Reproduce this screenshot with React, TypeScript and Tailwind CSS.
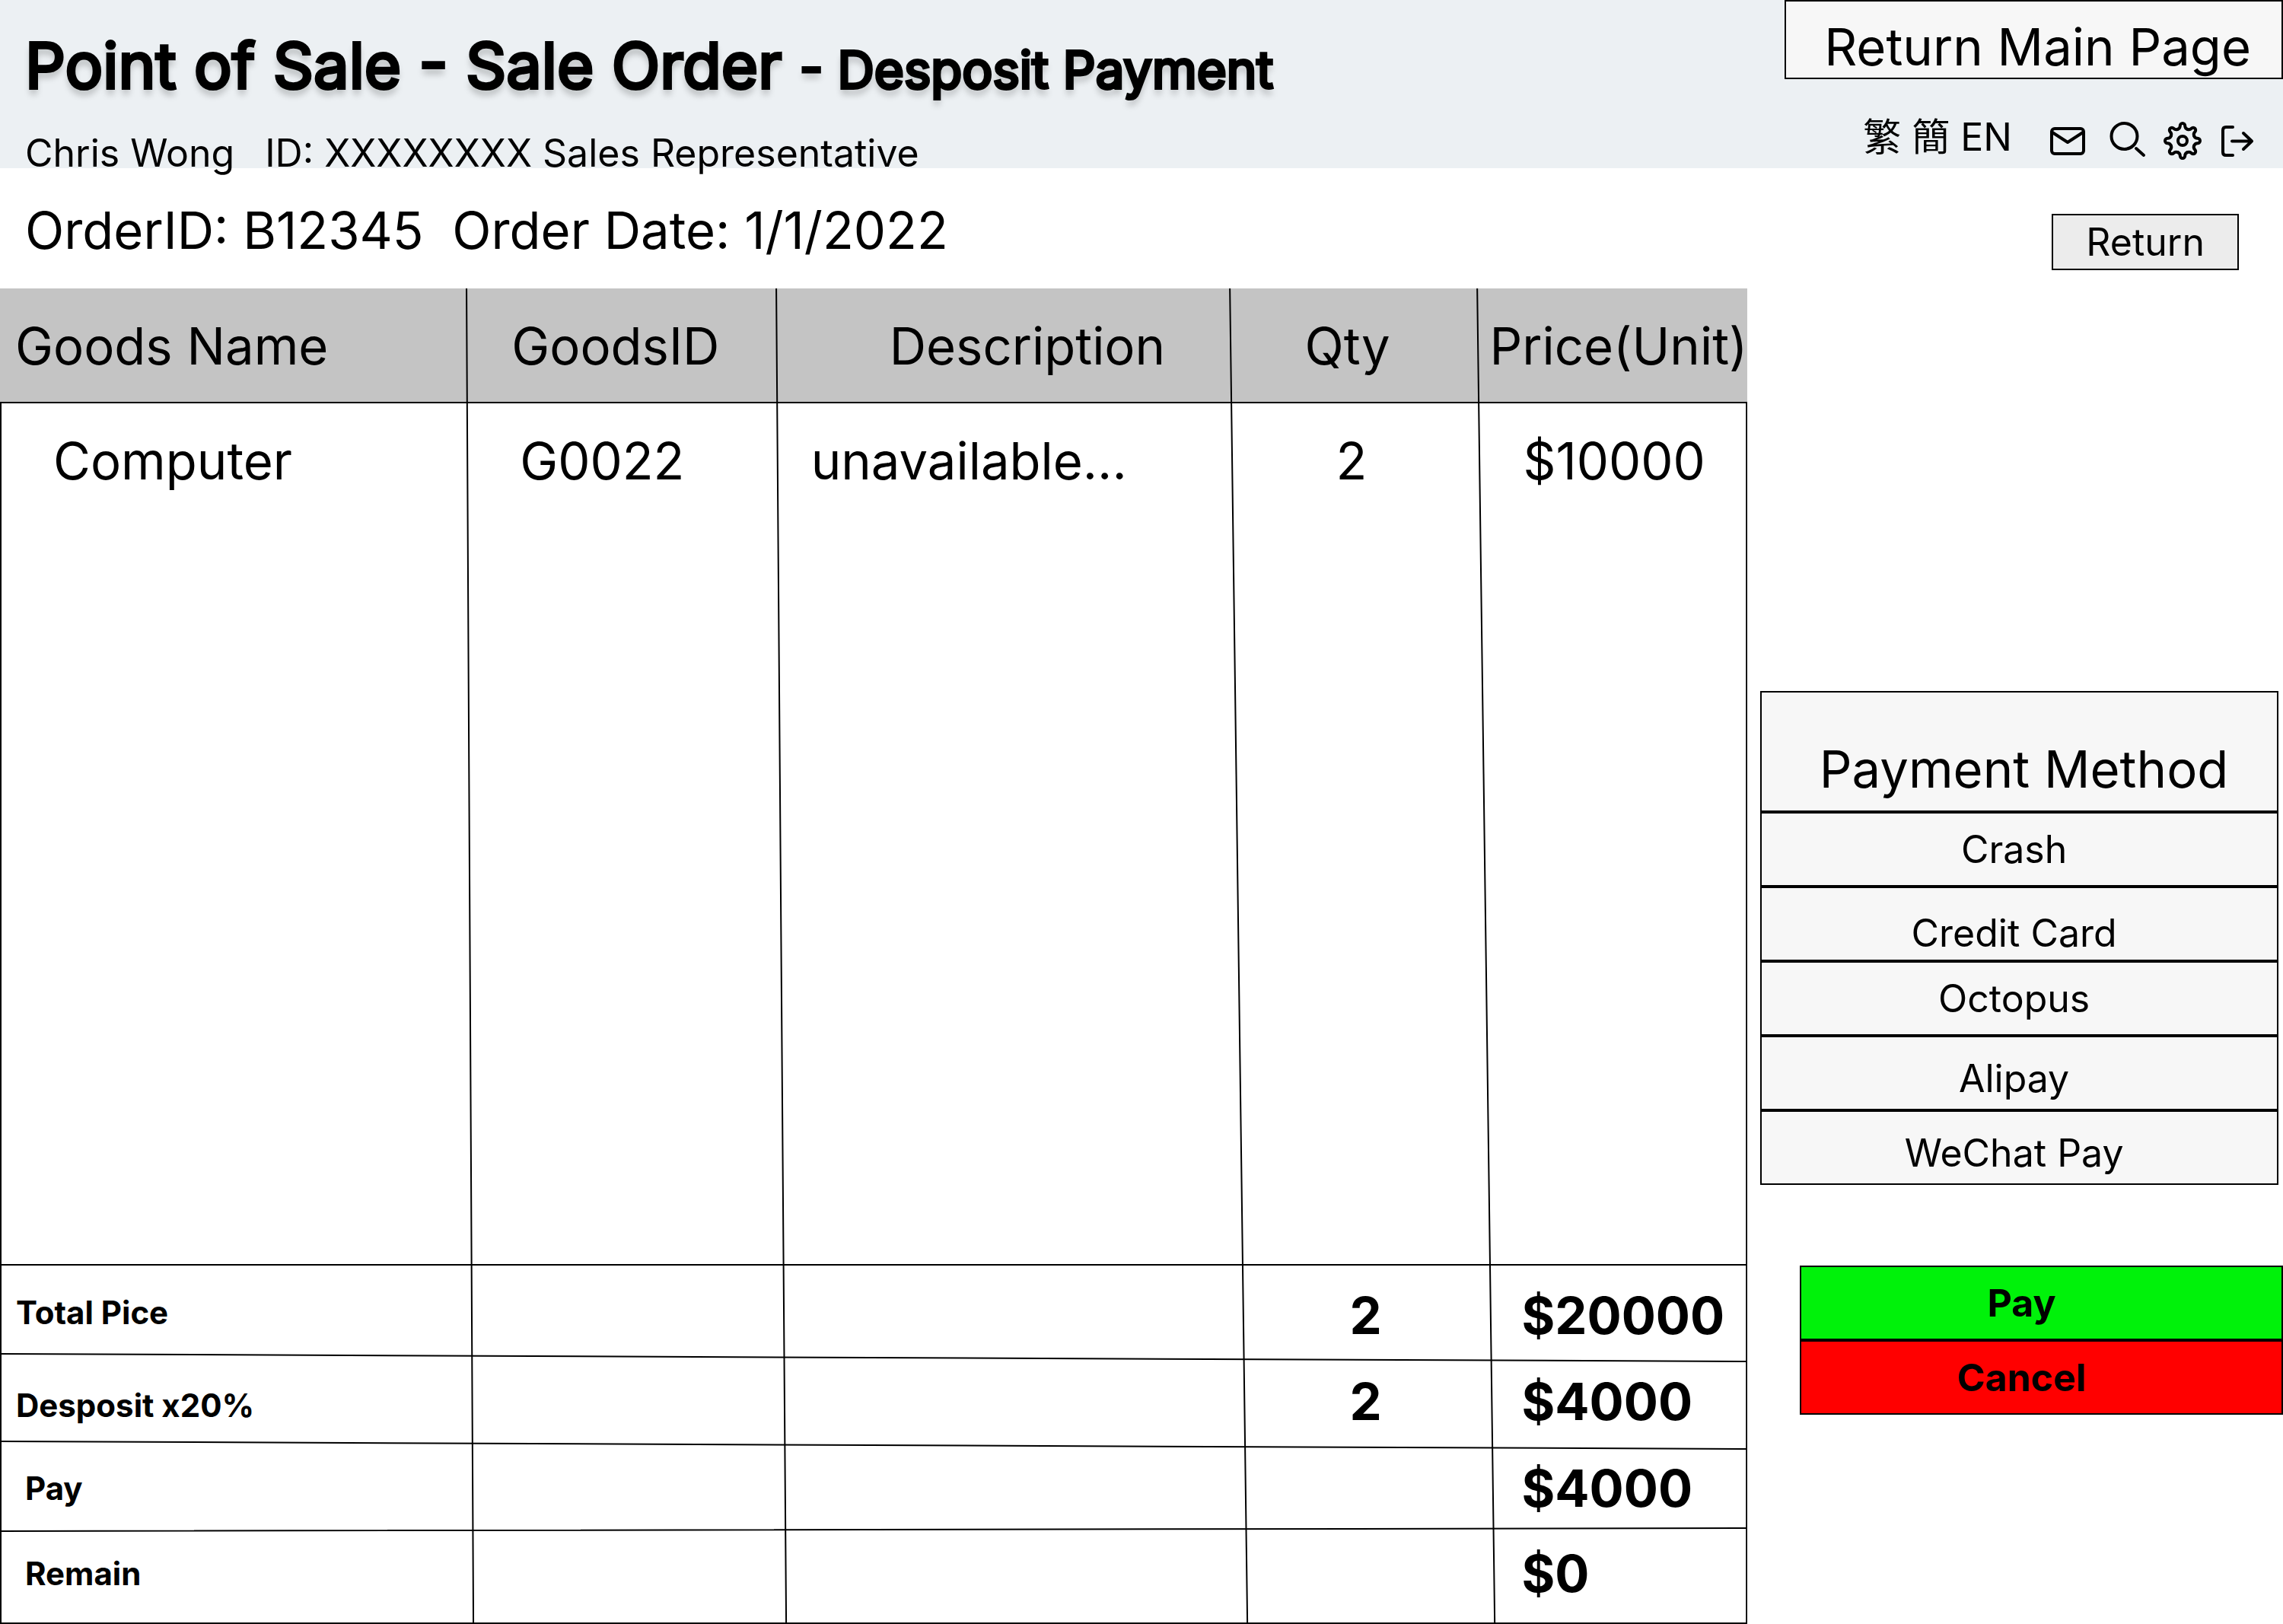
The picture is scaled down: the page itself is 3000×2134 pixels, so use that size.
import type { ReactNode } from "react";

const goods = [
  { name: "Computer", id: "G0022", description: "unavailable...", qty: "2", price: "$10000" },
];

const totals = [
  { label: "Total Pice", qty: "2", price: "$20000", row: "h-[122px]", labelPad: "pt-[38px] pl-[21px]", valuePad: "pt-[27px]" },
  { label: "Desposit x20%", qty: "2", price: "$4000", row: "h-[114px]", labelPad: "pt-[38px] pl-[21px]", valuePad: "pt-[18px]" },
  { label: "Pay", qty: "", price: "$4000", row: "h-[112px]", labelPad: "pt-[33px] pl-[33px]", valuePad: "pt-[18px]" },
  { label: "Remain", qty: "", price: "$0", row: "h-[124px]", labelPad: "pt-[33px] pl-[33px]", valuePad: "pt-[18px]" },
];

const methods = [
  { label: "Crash", pad: "pt-[17px]" },
  { label: "Credit Card", pad: "pt-[29px]" },
  { label: "Octopus", pad: "pt-[17px]" },
  { label: "Alipay", pad: "pt-[24px]" },
  { label: "WeChat Pay", pad: "pt-[24px]" },
];

const gearTeeth = [0, 45, 90, 135, 180, 225, 270, 315];

function IconButton({ label, children }: { label: string; children: ReactNode }) {
  return (
    <button type="button" aria-label={label} className="size-[54px] shrink-0">
      <svg viewBox="0 0 54 54" fill="none" stroke="currentColor" strokeWidth={4} strokeLinecap="round" strokeLinejoin="round" className="size-full overflow-visible">
        {children}
      </svg>
    </button>
  );
}

/* The hand-ruled, slightly slanted lines over the order table. */
function TableRules() {
  return (
    <svg
      aria-hidden="true"
      viewBox="0 0 2296 1755"
      preserveAspectRatio="none"
      className="pointer-events-none absolute inset-0 size-full"
      stroke="black"
      strokeWidth={2}
      fill="none"
    >
      <path d="M0 150H2296M1 149V1755M2295 149V1755M0 1754H2296" />
      <path d="M613 0L622 1754M1020 0L1033 1754M1616 0L1639 1754M1941 0L1964 1754" />
      <path d="M0 1283H2295M0 1400L2295 1410M0 1515L2295 1525M0 1633L2295 1629" />
    </svg>
  );
}

export default function App() {
  return (
    <div className="min-h-screen bg-white font-['Inter','Noto_Sans_CJK_TC',sans-serif] text-black">
      <header className="flex h-[221px] items-start justify-between bg-[#ecf0f3]">
        <div className="pt-[36px] pl-[33px] whitespace-nowrap">
          <h1 className="text-[83px] leading-[100px] font-normal [-webkit-text-stroke:4px_black] [text-shadow:0_8px_8px_rgba(0,0,0,0.25)]">
            Point of Sale - Sale Order <span className="text-[67px] leading-[80px]">- Desposit Payment</span>
          </h1>
          <p className="mt-[35px] flex text-[50px] leading-[60px]">
            <span className="mr-[40px]">Chris Wong</span>
            <span className="mr-[14px]">ID: XXXXXXXX</span>
            <span>Sales Representative</span>
          </p>
        </div>
        <div className="flex flex-col items-end">
          <button type="button" className="h-[104px] border-2 border-black bg-[#f7f7f7] pt-[19px] pr-[40px] pl-[50px] text-[67px] leading-[80px] whitespace-nowrap">
            Return Main Page
          </button>
          <div className="mt-[46px] flex items-start pr-[32px]">
            <div className="flex gap-[14px] text-[50px] leading-[60px]">
              <button type="button" lang="zh-Hant">繁</button>
              <button type="button" lang="zh-Hant">簡</button>
              <button type="button">EN</button>
            </div>
            <div className="mt-[8px] ml-[48px] flex gap-[20px]">
              <IconButton label="Messages">
                <rect x="4" y="11" width="42" height="33" rx="4" />
                <path d="M5 16L25 29L45 16" />
              </IconButton>
              <IconButton label="Search">
                <circle cx="25.5" cy="21" r="17" />
                <path d="M41 37L51 46" />
              </IconButton>
              <IconButton label="Settings">
                <circle cx="28" cy="27" r="6" />
                {gearTeeth.map((angle) => (
                  <path
                    key={angle}
                    transform={`translate(28 27) rotate(${angle})`}
                    d="M-6.3 -15.2C-4.3 -16 -3.2 -18 -3.2 -19.8A3.2 3.2 0 0 1 3.2 -19.8C3.2 -18 4.3 -16 6.3 -15.2"
                  />
                ))}
              </IconButton>
              <IconButton label="Log out">
                <path d="M20 9H11Q7 9 7 13V42Q7 46 11 46H20M19 27.5H45M34 17L45 27.5L34 38" />
              </IconButton>
            </div>
          </div>
        </div>
      </header>

      <div className="flex h-[158px] items-start justify-between pt-[42px] pr-[58px] pl-[33px]">
        <h2 className="text-[67px] leading-[80px] whitespace-pre">OrderID: B12345  Order Date: 1/1/2022</h2>
        <button type="button" className="mt-[18px] h-[74px] border-2 border-black bg-[#ececec] px-[43px] text-[50px] leading-[60px]">
          Return
        </button>
      </div>

      <main className="grid grid-cols-[76.54%_1fr]">
        <div className="relative">
          <table className="w-full table-fixed border-collapse text-left text-[67px] leading-[80px]">
            <colgroup>
              <col className="w-[26.75%]" />
              <col className="w-[17.7%]" />
              <col className="w-[25.95%]" />
              <col className="w-[14.15%]" />
              <col />
            </colgroup>
            <thead className="bg-[#c4c4c4]">
              <tr className="h-[149px] whitespace-nowrap">
                <th scope="col" className="pt-[2px] pl-[20px] font-normal">Goods Name</th>
                <th scope="col" className="pt-[2px] pl-[58px] font-normal">GoodsID</th>
                <th scope="col" className="pt-[2px] pl-[148px] font-normal">Description</th>
                <th scope="col" className="pt-[2px] pl-[98px] font-normal">Qty</th>
                <th scope="col" className="pt-[2px] pl-[16px] font-normal">Price(Unit)</th>
              </tr>
            </thead>
            <tbody>
              {goods.map((item) => (
                <tr key={item.id} className="h-[1134px] align-top">
                  <td className="pt-[38px] pl-[70px]">{item.name}</td>
                  <td className="pt-[38px] pl-[69px]">{item.id}</td>
                  <td className="pt-[38px] pl-[45px]">{item.description}</td>
                  <td className="pt-[38px] pl-[139px]">{item.qty}</td>
                  <td className="pt-[38px] pl-[60px]">{item.price}</td>
                </tr>
              ))}
            </tbody>
            <tfoot className="font-bold">
              {totals.map((total) => (
                <tr key={total.label} className={`${total.row} align-top`}>
                  <th scope="row" className={`${total.labelPad} text-[42px] leading-[50px]`}>{total.label}</th>
                  <td />
                  <td />
                  <td className={`${total.valuePad} pl-[157px]`}>{total.qty}</td>
                  <td className={`${total.valuePad} pl-[58px]`}>{total.price}</td>
                </tr>
              ))}
            </tfoot>
          </table>
          <TableRules />
        </div>

        <aside className="pt-[529px] pl-[17px]">
          <section className="mr-[6px]">
            <h2 className="h-[159px] border-2 border-black bg-[#f7f7f7] pt-[61px] pl-[12px] text-center text-[67px] leading-[80px]">
              Payment Method
            </h2>
            {methods.map((method) => (
              <button
                key={method.label}
                type="button"
                className={`${method.pad} flex h-[98px] w-full items-start justify-center border-2 border-black bg-[#f7f7f7] pr-[14px] text-[50px] leading-[60px]`}
              >
                {method.label}
              </button>
            ))}
          </section>
          <div className="mt-[106px] ml-[52px] text-[50px] leading-[60px] font-bold">
            <button type="button" className="block h-[98px] w-full border-2 border-black bg-[#00f20a] pr-[52px]">
              Pay
            </button>
            <button type="button" className="block h-[98px] w-full border-2 border-black bg-[#ff0000] pr-[52px]">
              Cancel
            </button>
          </div>
        </aside>
      </main>
    </div>
  );
}
